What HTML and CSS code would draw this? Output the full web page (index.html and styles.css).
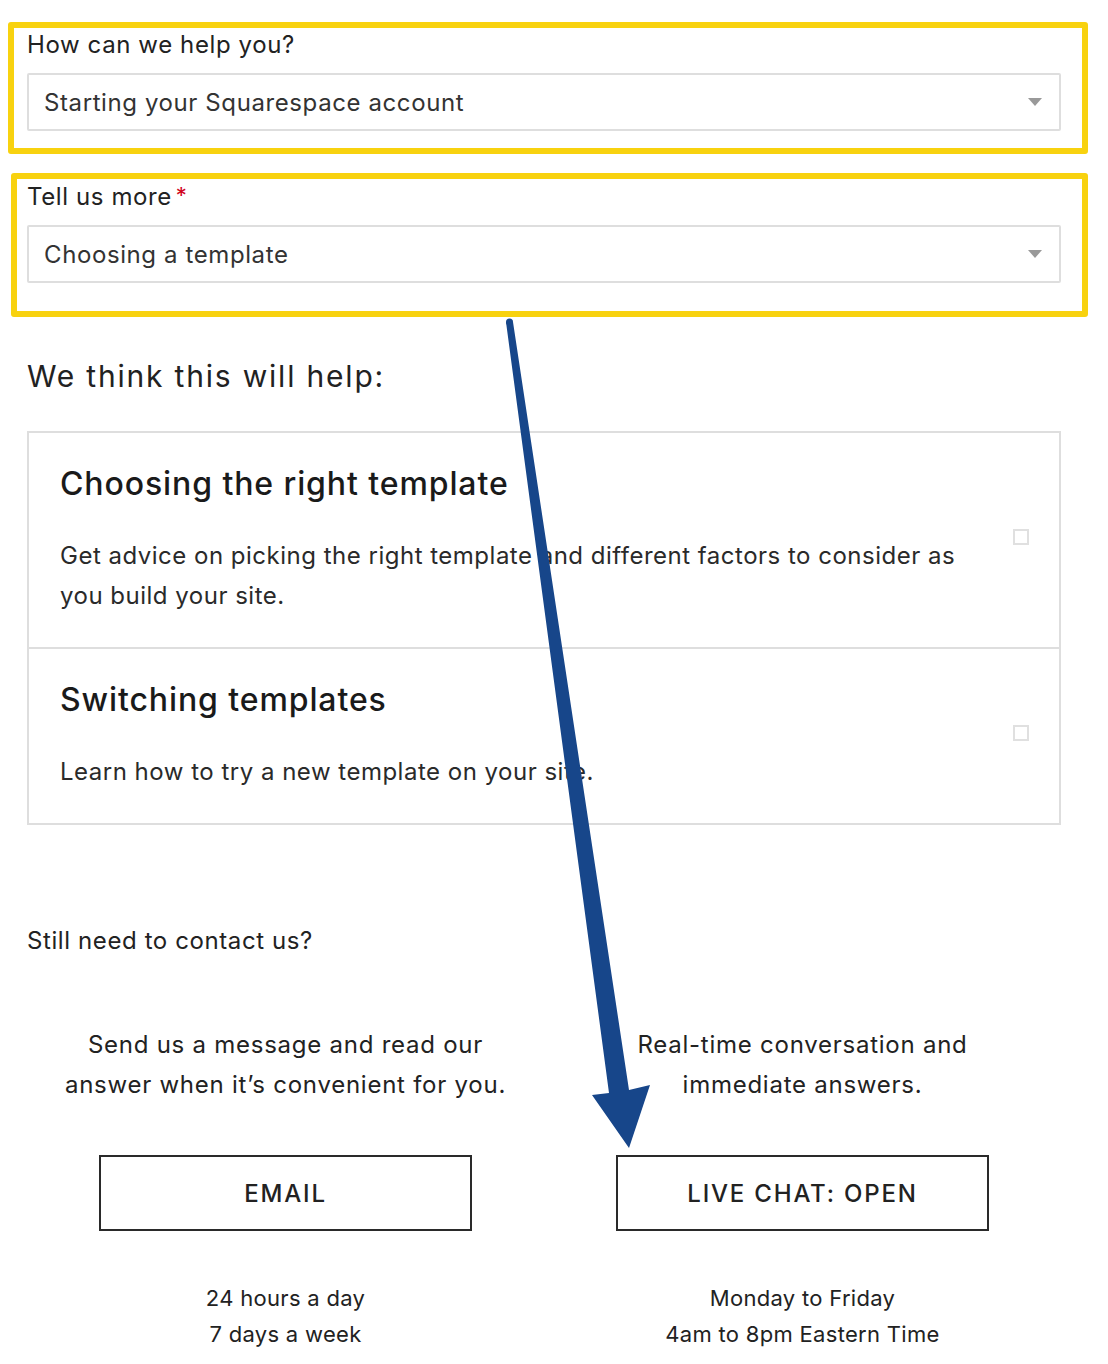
FILE: index.html
```html
<!DOCTYPE html>
<html lang="en">
<head>
    <meta charset="UTF-8">
    <title>Contact Support</title>
    <link rel="stylesheet" href="styles.css">
</head>
<body>
    <div class="page">
        <div class="field first">
            <label class="field-label">How can we help you?</label>
            <div class="select">
                <span>Starting your Squarespace account</span>
                <span class="caret"></span>
            </div>
        </div>

        <div class="field second">
            <label class="field-label">Tell us more<span class="required">*</span></label>
            <div class="select">
                <span>Choosing a template</span>
                <span class="caret"></span>
            </div>
        </div>

        <h2 class="help-title">We think this will help:</h2>

        <div class="articles">
            <div class="article">
                <div class="article-body">
                    <h3>Choosing the right template</h3>
                    <p>Get advice on picking the right template and different factors to consider as you build your site.</p>
                </div>
                <span class="check"></span>
            </div>
            <div class="article">
                <div class="article-body">
                    <h3>Switching templates</h3>
                    <p>Learn how to try a new template on your site.</p>
                </div>
                <span class="check"></span>
            </div>
        </div>

        <p class="still">Still need to contact us?</p>

        <div class="options">
            <div class="option">
                <p class="option-text">Send us a message and read our<br>answer when it’s convenient for you.</p>
                <button class="option-btn">EMAIL</button>
                <p class="hours">24 hours a day<br>7 days a week</p>
            </div>
            <div class="option">
                <p class="option-text">Real-time conversation and<br>immediate answers.</p>
                <button class="option-btn">LIVE CHAT: OPEN</button>
                <p class="hours">Monday to Friday<br>4am to 8pm Eastern Time</p>
            </div>
        </div>
    </div>

    <!-- annotation overlays -->
    <div class="mark mark-one"></div>
    <div class="mark mark-two"></div>
    <svg class="arrow" width="1108" height="1364" viewBox="0 0 1108 1364">
        <circle cx="509.5" cy="322" r="3.5" fill="#17468a"/>
        <polygon fill="#17468a" points="506,322 513,322 629,1090 650,1085 629,1148 592,1095 609,1093"/>
    </svg>
</body>
</html>
```

FILE: styles.css
```css
body {
    margin: 0;
    font-family: Inter, "Liberation Sans", sans-serif;
    letter-spacing: 0.6px;
    color: #222;
    background: #fff;
    position: relative;
}

.page {
    width: 1034px;
    padding: 30px 47px 0 27px;
}

.field-label {
    display: block;
    font-size: 24px;
    line-height: 30px;
    margin-bottom: 13px;
    color: #222;
}
.required {
    color: #d0021b;
    margin-left: 4px;
    font-size: 22px;
    line-height: 0;
    vertical-align: 2px;
}
.field.second {
    margin-top: 51px;
}

.select {
    box-sizing: border-box;
    height: 58px;
    border: 2px solid #dedede;
    border-radius: 2px;
    padding: 0 17px 0 15px;
    display: flex;
    align-items: center;
    justify-content: space-between;
    font-size: 24px;
    color: #333;
}
.caret {
    width: 0;
    height: 0;
    border-left: 7px solid transparent;
    border-right: 7px solid transparent;
    border-top: 8px solid #999;
}

.help-title {
    margin: 73px 0 35px;
    font-size: 30px;
    line-height: 40px;
    font-weight: 400;
    letter-spacing: 1.8px;
    color: #222;
}

.articles {
    border: 2px solid #dedede;
}
.article {
    display: flex;
    align-items: center;
    padding: 31px 32px 31px 31px;
}
.article + .article {
    border-top: 2px solid #dedede;
}
.article-body {
    flex: 1;
    padding-right: 30px;
}
.article h3 {
    margin: 0 0 32px;
    font-size: 32px;
    line-height: 40px;
    font-weight: 500;
    letter-spacing: 0.9px;
    color: #1a1a1a;
}
.article p {
    margin: 0;
    font-size: 24px;
    line-height: 40px;
    letter-spacing: 0.5px;
    color: #2a2a2a;
}
.check {
    width: 16px;
    height: 16px;
    box-sizing: border-box;
    border: 2px solid #e0e0e0;
    margin: -6px -2px 0 0;
}

.still {
    margin: 101px 0 0;
    font-size: 24px;
    line-height: 30px;
}

.options {
    display: grid;
    grid-template-columns: 1fr 1fr;
    margin-top: 69px;
}
.option {
    display: flex;
    flex-direction: column;
    align-items: center;
    text-align: center;
}
.option-text {
    margin: 0;
    font-size: 24px;
    line-height: 40px;
    letter-spacing: 0.75px;
    color: #222;
}
.option-btn {
    margin-top: 50px;
    width: 373px;
    height: 76px;
    background: #fff;
    border: 2px solid #2a2a2a;
    font-family: inherit;
    font-size: 24px;
    font-weight: 500;
    letter-spacing: 1.8px;
    color: #222;
}
.hours {
    margin: 49px 0 0;
    font-size: 22px;
    line-height: 36px;
    letter-spacing: 0.3px;
    color: #222;
}

.mark {
    position: absolute;
    box-sizing: border-box;
    border: 6px solid #f8d20f;
    border-radius: 3px;
}
.mark-one {
    left: 8px;
    top: 22px;
    width: 1080px;
    height: 132px;
}
.mark-two {
    left: 11px;
    top: 173px;
    width: 1077px;
    height: 144px;
}
.arrow {
    position: absolute;
    left: 0;
    top: 0;
    pointer-events: none;
}
```
